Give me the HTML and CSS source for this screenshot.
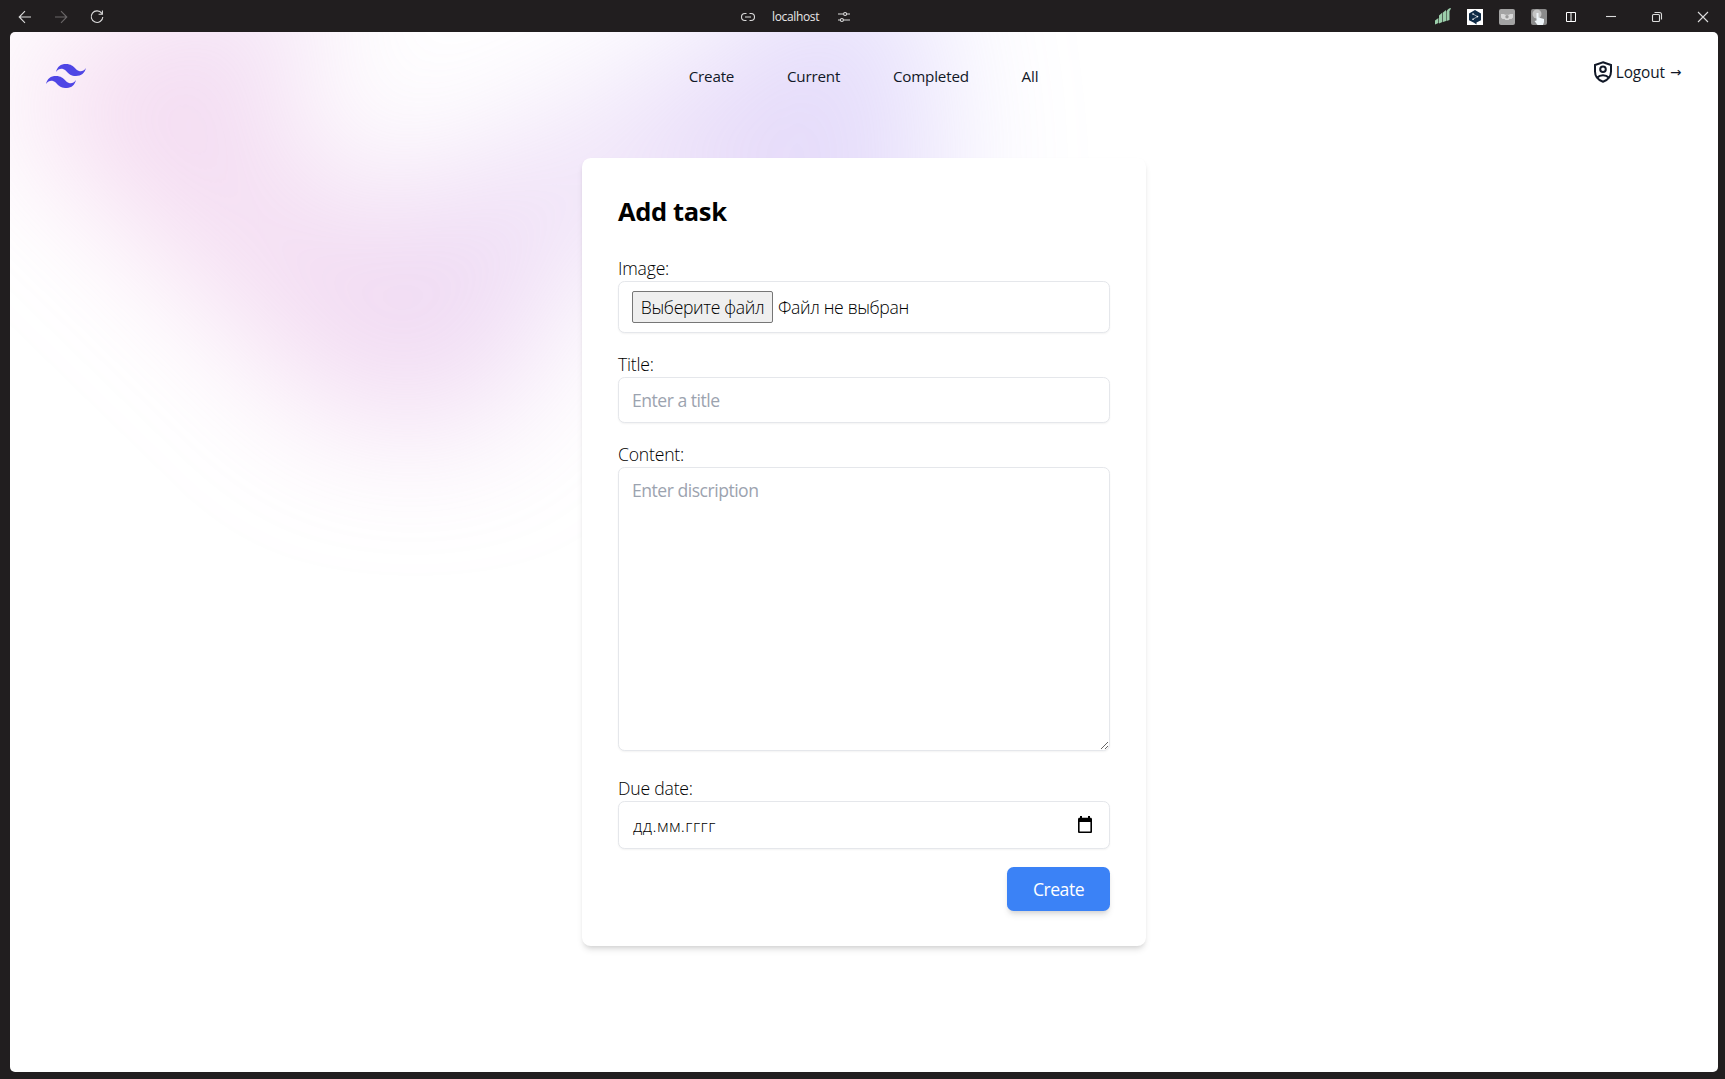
FILE: index.html
```html
<!DOCTYPE html>
<html lang="en">
<head>
<meta charset="utf-8">
<title>Add task</title>
<link rel="stylesheet" href="styles.css">
</head>
<body>
<div class="titlebar">
  <div class="nav-buttons">
    <svg width="14" height="14" viewBox="0 0 14 14" class="ico"><path d="M13 7H1.5M7 1.2 1.2 7 7 12.8"/></svg>
    <svg width="14" height="14" viewBox="0 0 14 14" class="ico dim"><path d="M1 7h11.5M7 1.2 12.8 7 7 12.8"/></svg>
    <svg width="14" height="14" viewBox="0 0 14 14" class="ico"><path d="M11.8 3.4A5.8 5.8 0 1 0 12.8 7M12.4.4v3.8H8.6"/></svg>
  </div>
  <div class="address">
    <svg width="14" height="10" viewBox="0 0 14 10" class="ico"><path d="M5.5 1.5H4a3.3 3.3 0 0 0 0 7h1.500M8.500 1.500H10a3.300 3.300 0 0 1 0 7H8.500M4 5h6"/></svg>
    <span class="host">localhost</span>
    <svg width="14" height="12" viewBox="0 0 14 12" class="ico"><path d="M1 3h5.500M9.700 3H13M1 9h2.300M6.500 9H13"/><circle cx="8.100" cy="3" r="1.500"/><circle cx="4.900" cy="9" r="1.500"/></svg>
  </div>
  <div class="extensions">
    <svg width="16" height="17" viewBox="0 0 16 17"><path fill="#9ccfab" d="M0 12.500 3.400 10V15L0 16.500zM4 7.500l3.400-3V14L4 15.500zM8 4.500l3-2.500v11l-3 1zM11.500 3.500C12.500 1 14 .3 16 0c-.5 1.500-1 2.500-1.500 3v9l-3 1z"/></svg>
    <svg width="16" height="16" viewBox="0 0 16 16"><path fill="#fff" d="M0 0h16v16H0z"/><path fill="#0f2b46" d="m8 1 6 3.400v6.800L9.500 13.500V15.500L7 13.800 2 11.200V4.400z"/><path d="m6 5 4.500 2.600L6 10.200" fill="none" stroke="#fff" stroke-width=".6"/><circle cx="6" cy="5" r=".8" fill="#fff"/><circle cx="10.500" cy="7.600" r=".8" fill="#fff"/><circle cx="6" cy="10.200" r=".8" fill="#fff"/></svg>
    <svg width="16" height="16" viewBox="0 0 16 16"><rect width="16" height="16" rx="2" fill="#a3a3a3"/><path fill="#d8d8d8" d="M2 5h3l1 .7h4l1-.7h3v3.500l-1.500 1.500h-2L9.500 11h-3l-1-1h-2L2 8.500z"/><circle cx="8" cy="7.800" r="1.700" fill="#999"/></svg>
    <svg width="16" height="16" viewBox="0 0 16 16"><rect width="16" height="16" rx="2" fill="#8b8b8b"/><circle cx="6" cy="5" r="4.500" fill="#c4c4c4"/><path fill="#eef4f8" d="M5.500 4h2v4.500l5.500 1.500v3L12 16H6.500L3.500 12l2-.5z"/></svg>
    <svg width="10" height="10" viewBox="0 0 10 10" class="panel"><path d="M.5.5h9v9h-9zM5 .5v9"/></svg>
  </div>
  <div class="window-controls">
    <svg width="10" height="10" viewBox="0 0 10 10" class="ico"><path d="M0 4.500h10"/></svg>
    <svg width="10" height="10" viewBox="0 0 10 10" class="ico"><rect x=".5" y="2.500" width="7" height="7" rx="1"/><path d="M2.500.5h5a2 2 0 0 1 2 2v5"/></svg>
    <svg width="10" height="10" viewBox="0 0 10 10" class="ico"><path d="m0 0 10 10M10 0 0 10"/></svg>
  </div>
</div>
<main class="page">
  <div class="glow"><div class="glow-shape"></div></div>
  <header class="header">
    <div class="side">
      <svg class="logo" viewBox="0 0 54 33"><path d="M27 0c-7.200 0-11.700 3.600-13.500 10.800 2.700-3.600 5.850-4.950 9.450-4.050 2.054.513 3.522 2.004 5.147 3.653C30.744 13.090 33.808 16.200 40.500 16.200c7.200 0 11.700-3.600 13.500-10.800-2.700 3.600-5.850 4.950-9.450 4.050-2.054-.513-3.522-2.004-5.147-3.653C36.756 3.110 33.692 0 27 0zM13.500 16.200C6.300 16.200 1.800 19.800 0 27c2.700-3.600 5.850-4.950 9.450-4.050 2.054.514 3.522 2.004 5.147 3.653C17.244 29.290 20.308 32.400 27 32.400c7.200 0 11.700-3.600 13.500-10.800-2.700 3.600-5.850 4.950-9.450 4.050-2.054-.513-3.522-2.004-5.147-3.653C23.256 19.310 20.192 16.200 13.500 16.200z"/></svg>
    </div>
    <nav class="links">
      <a>Create</a><a>Current</a><a>Completed</a><a>All</a>
    </nav>
    <div class="side end">
      <svg class="shield" width="20" height="22" viewBox="0 0 20 22"><path d="M10 1.300 18 4v6.500c0 5-3.400 8.600-8 10.200-4.600-1.600-8-5.200-8-10.200V4z"/><circle cx="10" cy="8.300" r="2.800"/><path d="M4.300 16.500c2.800-3 8.600-3 11.400 0"/></svg>
      <a class="logout">Logout</a>
      <span class="arrow">→</span>
    </div>
  </header>
  <form class="card">
    <h2>Add task</h2>
    <label class="field-label">Image:</label>
    <div class="field file"><span class="file-btn">Выберите файл</span><span class="file-text">Файл не выбран</span></div>
    <label class="field-label">Title:</label>
    <input class="field title-input" placeholder="Enter a title">
    <label class="field-label">Content:</label>
    <textarea class="field content-input" placeholder="Enter discription"></textarea>
    <label class="field-label">Due date:</label>
    <div class="field date"><span class="date-text">дд.мм.гггг</span>
      <svg width="16" height="18" viewBox="0 0 16 18"><path fill="#000" fill-rule="evenodd" d="M3 0h2v1.800h6V0h2v1.800h.5c1 0 1.500.6 1.500 1.500v12.200c0 1-.5 1.500-1.500 1.500h-11C1.500 17 1 16.500 1 15.500V3.300c0-.9.5-1.500 1.500-1.500H3zM2.600 6v9.400h10.800V6z"/></svg>
    </div>
    <button type="button" class="submit">Create</button>
  </form>
</main>
</body>
</html>
```
FILE: styles.css
```css
* { box-sizing: border-box; }
html { font-size: 17.6px; }
body {
  margin: 0;
  height: 1079px;
  overflow: hidden;
  display: flex;
  flex-direction: column;
  background: #211e1f;
  font-family: "Open Sans", "Noto Sans", sans-serif;
  color: #000;
}
svg { display: block; flex: none; }

.titlebar {
  height: 32px;
  flex: none;
  display: grid;
  grid-template-columns: 740px 1fr auto auto;
  align-items: center;
  padding: 1px 17px 0 18px;
}
.nav-buttons { display: flex; gap: 22px; }
.ico { fill: none; stroke: #dcdcdc; stroke-width: 1.1; overflow: visible; }
.dim { stroke: #6a6768; }
.address { display: flex; align-items: center; gap: 17px; margin-left: -17px; }
.host { color: #e8e8e8; font-size: 12px; letter-spacing: -0.35px; width: 49px; margin: 0 -1px 0 0; }
.extensions { display: flex; align-items: center; gap: 16px; }
.panel { fill: none; stroke: #fff; stroke-width: 1; margin-left: 3px; overflow: visible; }
.window-controls { display: flex; gap: 36px; margin-left: 30px; }

.page {
  position: relative;
  isolation: isolate;
  flex: 1;
  margin: 0 7px 7px 10px;
  border-radius: 5px;
  background: #fff;
  overflow: hidden;
}
/* Decorative gradient behind the header */
.glow {
  position: absolute;
  left: 0;
  right: 0;
  top: -20rem;
  z-index: -1;
  overflow: hidden;
  filter: blur(70.4px);
}
.glow-shape {
  position: relative;
  left: calc(50% - 30rem);
  width: 72.1875rem;
  aspect-ratio: 1155 / 678;
  transform: translateX(-50%) rotate(30deg);
  background: linear-gradient(to top right, #ff80b5, #9089fc);
  opacity: 0.3;
  clip-path: polygon(74.1% 44.1%, 100% 61.6%, 97.5% 26.9%, 85.5% 0.1%, 80.7% 2%, 72.5% 32.5%, 60.2% 62.4%, 52.4% 68.1%, 47.5% 58.3%, 45.2% 34.5%, 27.5% 76.7%, 0.1% 64.9%, 17.9% 100%, 27.6% 76.8%, 76.1% 97.7%, 74.1% 44.1%);
}

.header { display: flex; align-items: center; height: 88px; padding: 0 35px 0 36px; }
.side { flex: 1; display: flex; align-items: center; }
.end { justify-content: flex-end; margin-bottom: 8px; }
.logo { width: 40px; height: 24.500px; fill: #4f46e5; }
.links {
  display: flex;
  gap: 52.800px;
  margin: 0 1px 0 -1px;
  color: #111827;
  font-size: 15.200px;
  font-weight: 500;
  letter-spacing: -0.2px;
}
.logout { color: #111827; font-size: 15.400px; font-weight: 500; letter-spacing: -0.1px; margin-left: 3px; }
.arrow { width: 13px; margin-left: 5px; font: 13.500px/16px "DejaVu Sans", sans-serif; color: #111827; }
.shield { fill: none; stroke: #111827; stroke-width: 2; }

.card {
  width: 564px;
  height: 788px;
  margin: 38px 0 0 572px;
  padding: 36px 36px 35px;
  display: flex;
  flex-direction: column;
  background: #fff;
  border-radius: 8.800px;
  box-shadow: 0 4.400px 6.600px -1px rgba(0,0,0,.1), 0 2.200px 4.400px -2px rgba(0,0,0,.1);
}
h2 { margin: 0 0 26px; font-size: 25.500px; line-height: 35px; font-weight: 700; letter-spacing: -0.35px; }
.field-label {
  height: 26px;
  flex: none;
  font-size: 17.600px;
  line-height: 26px;
  font-weight: 350;
  letter-spacing: -0.2px;
}
.field {
  flex: none;
  width: 492px;
  margin: 0 0 18px;
  padding: 0 13px;
  border: 1px solid #e5e7eb;
  border-radius: 6.600px;
  background: #fff;
  box-shadow: 0 1px 2px rgba(0,0,0,.05);
  font: 400 17.600px "Open Sans", "Noto Sans", sans-serif;
  letter-spacing: -0.5px;
  color: #000;
  outline: none;
}
.field::placeholder { color: #9ca3af; opacity: 1; }
.file { height: 52px; display: flex; align-items: center; gap: 5px; font-weight: 330; letter-spacing: -0.35px; }
.file-btn {
  width: 141px;
  height: 32px;
  border: 1px solid #767676;
  border-radius: 2px;
  background: #efefef;
  line-height: 31px;
  text-align: center;
  white-space: nowrap;
}
.title-input { height: 46px; }
.content-input { height: 284px; padding-top: 10px; margin-bottom: 24px; resize: vertical; }
.date {
  height: 48px;
  display: flex;
  align-items: center;
  justify-content: space-between;
  padding: 0 16px 0 14px;
  font-size: 17px;
  font-weight: 350;
  letter-spacing: 0.45px;
}
.submit {
  width: 103px;
  height: 44px;
  align-self: flex-end;
  border: 0;
  padding: 0;
  border-radius: 6.600px;
  background: #3b82f6;
  color: #fff;
  font: 400 17.600px "Open Sans", "Noto Sans", sans-serif;
  letter-spacing: -0.5px;
  box-shadow: 0 4.400px 6.600px -1px rgba(0,0,0,.1), 0 2.200px 4.400px -2px rgba(0,0,0,.1);
}
```
